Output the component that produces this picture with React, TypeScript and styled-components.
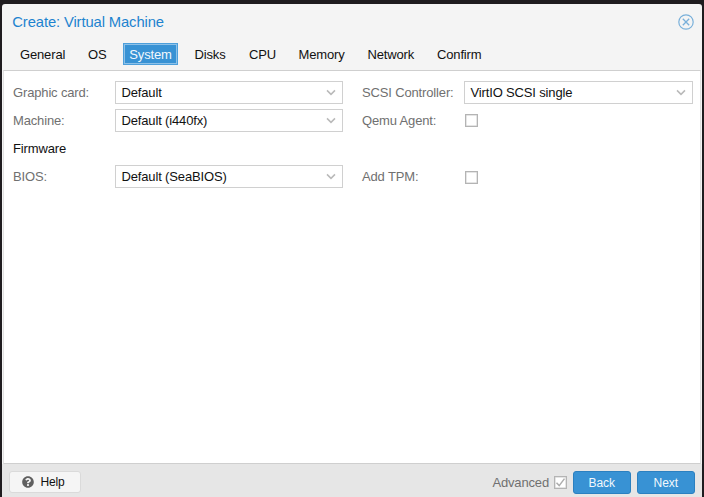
import React from 'react';
import styled, { createGlobalStyle } from 'styled-components';
import { FaQuestionCircle } from 'react-icons/fa';

const GlobalStyle = createGlobalStyle`
  * { box-sizing: border-box; }
  html, body { margin: 0; overflow: hidden; }
  body { background: #1f1c1f; font: 13px/20px "Liberation Sans", Arial, sans-serif; letter-spacing: -0.15px; color: #111; }
`;

const Screen = styled.div`
  height: 497px;
  width: 704px;
  padding: 4px 2px 0;
`;

const Dialog = styled.div`
  height: 493px;
  display: flex;
  flex-direction: column;
  background: #f4f4f4;
  border-radius: 3px 3px 0 0;
  overflow: hidden;
`;

const Header = styled.header`
  height: 36px;
  padding: 0 8.5px 0 10.3px;
  display: flex;
  align-items: center;
  justify-content: space-between;
`;

const Title = styled.h1`
  margin: 0;
  font-size: 14.8px;
  letter-spacing: -0.12px;
  font-weight: 400;
  color: #1d83cf;
`;

const CloseButton = styled.button`
  width: 16px;
  height: 16px;
  padding: 0;
  border: 0;
  background: none;
  svg { display: block; }
`;

const Tabs = styled.nav`
  height: 30px;
  display: flex;
  align-items: flex-start;
  padding: 3px 0 0 18px;
`;

const Tab = styled.button<{ $width: number; $active?: boolean }>`
  width: ${p => p.$width}px;
  height: 22px;
  padding: 1px 0 0;
  flex: none;
  font: inherit;
  letter-spacing: inherit;
  line-height: 20px;
  white-space: nowrap;
  text-align: ${p => (p.$active ? 'center' : 'left')};
  border: ${p => (p.$active ? '1px solid #4d9fdb' : '0')};
  background: ${p => (p.$active ? '#3892d4' : 'transparent')};
  box-shadow: ${p => (p.$active ? 'inset 0 0 0 1px #8dc1e8' : 'none')};
  margin-right: ${p => (p.$active ? '16.5px' : '0')};
  color: ${p => (p.$active ? '#f2f8fd' : '#111')};
`;

const Body = styled.main`
  flex: 1;
  margin: 0 1px;
  padding: 10px 8px 0 9px;
  background: #fff;
  border: 1px solid #cfcfcf;
  border-left-color: #e1e1e1;
  border-right-color: #e1e1e1;
`;

const Form = styled.div`
  display: grid;
  grid-template-columns: 102px 228px 19px 102px 229px;
  grid-template-rows: 23px 23px 23px 23px;
  row-gap: 5px;
  align-items: center;
`;

const Label = styled.label<{ $column: number; $row: number; $dark?: boolean }>`
  grid-column: ${p => p.$column};
  grid-row: ${p => p.$row};
  padding-top: 1px;
  color: ${p => (p.$dark ? '#111' : '#707070')};
  white-space: nowrap;
`;

const ComboBox = styled.div<{ $column: number; $row: number }>`
  grid-column: ${p => p.$column};
  grid-row: ${p => p.$row};
  height: 23px;
  padding: 0 6px 0 5.5px;
  display: flex;
  justify-content: space-between;
  align-items: center;
  border: 1px solid #d0d0d0;
  background: #fff;
  line-height: 21px;
`;

const Check = styled.span<{ $column?: number; $row?: number }>`
  grid-column: ${p => p.$column ?? 'auto'};
  grid-row: ${p => p.$row ?? 'auto'};
  width: 13px;
  height: 13px;
  margin-left: 1px;
  margin-top: ${p => (p.$row === 4 ? '2px' : '0')};
  flex: none;
  border: 1px solid #b4b4b4;
  background: #fff;
  box-shadow: inset 0 0 0 0.5px #ccc;
  svg { display: block; }
`;

const Footer = styled.footer`
  height: 33px;
  padding: 0 7px;
  display: flex;
  align-items: flex-end;
  justify-content: space-between;
  background: #e6e6e6;
`;

const HelpButton = styled.button`
  width: 72px;
  height: 22px;
  margin-bottom: 4px;
  padding: 0 0 0 12px;
  display: flex;
  align-items: center;
  gap: 6.5px;
  border: 1px solid #dadada;
  border-radius: 3px;
  background: #f5f5f5;
  font: inherit;
  font-size: 12px;
  letter-spacing: -0.15px;
  color: #111;
`;

const Actions = styled.div`
  display: flex;
  align-items: center;
  margin-bottom: 3px;
`;

const AdvancedLabel = styled.label`
  margin-right: 4px;
  color: #707070;
`;

const PrimaryButton = styled.button`
  width: 58.5px;
  height: 23px;
  margin-left: 5.5px;
  padding: 0;
  border: 1px solid #2b80c0;
  border-radius: 3px;
  background: #3892d4;
  color: #f2f8fd;
  font: inherit;
  font-size: 12px;
  letter-spacing: -0.1px;
`;

const Chevron = () => (
  <svg width="10" height="8" viewBox="0 0 10 8" fill="none" stroke="#bababa" strokeWidth="1.5">
    <path d="M1 1.4 5 5.4 9 1.4" />
  </svg>
);

const tabs = [
  { name: 'General', width: 68 },
  { name: 'OS', width: 35 },
  { name: 'System', width: 55 },
  { name: 'Disks', width: 54.5 },
  { name: 'CPU', width: 49.5 },
  { name: 'Memory', width: 69 },
  { name: 'Network', width: 69.5 },
  { name: 'Confirm', width: 66 },
];

export default function App() {
  return (
    <Screen>
      <GlobalStyle />
      <Dialog>
        <Header>
          <Title>Create: Virtual Machine</Title>
          <CloseButton aria-label="Close">
            <svg width="16" height="16" viewBox="0 0 16 16" fill="none" stroke="#79b0da">
              <circle cx="8" cy="8" r="7.2" strokeWidth="1.2" />
              <path d="m4.8 4.8 6.4 6.4m0-6.4-6.4 6.4" strokeWidth="1.3" />
            </svg>
          </CloseButton>
        </Header>
        <Tabs>
          {tabs.map(t => (
            <Tab key={t.name} $width={t.width} $active={t.name === 'System'}>{t.name}</Tab>
          ))}
        </Tabs>
        <Body>
          <Form>
            <Label $column={1} $row={1}>Graphic card:</Label>
            <ComboBox $column={2} $row={1}>Default<Chevron /></ComboBox>
            <Label $column={4} $row={1}>SCSI Controller:</Label>
            <ComboBox $column={5} $row={1}>VirtIO SCSI single<Chevron /></ComboBox>
            <Label $column={1} $row={2}>Machine:</Label>
            <ComboBox $column={2} $row={2}>Default (i440fx)<Chevron /></ComboBox>
            <Label $column={4} $row={2}>Qemu Agent:</Label>
            <Check $column={5} $row={2} />
            <Label $column={1} $row={3} $dark>Firmware</Label>
            <Label $column={1} $row={4}>BIOS:</Label>
            <ComboBox $column={2} $row={4}>Default (SeaBIOS)<Chevron /></ComboBox>
            <Label $column={4} $row={4}>Add TPM:</Label>
            <Check $column={5} $row={4} />
          </Form>
        </Body>
        <Footer>
          <HelpButton><FaQuestionCircle size={12} color="#606060" />Help</HelpButton>
          <Actions>
            <AdvancedLabel>Advanced</AdvancedLabel>
            <Check>
              <svg width="11" height="11" viewBox="0 0 11 11" fill="none" stroke="#adadad" strokeWidth="1.5">
                <path d="m1.5 5.8 2.7 2.8 5.3-7" />
              </svg>
            </Check>
            <PrimaryButton>Back</PrimaryButton>
            <PrimaryButton>Next</PrimaryButton>
          </Actions>
        </Footer>
      </Dialog>
    </Screen>
  );
}
